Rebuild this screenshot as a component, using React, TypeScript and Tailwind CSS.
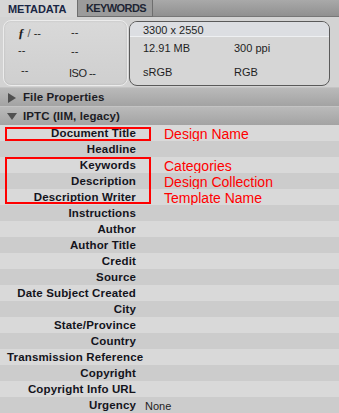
import React from "react";

const rows: { label: string; note?: string; value?: string }[] = [
  { label: "Document Title", note: "Design Name" },
  { label: "Headline" },
  { label: "Keywords", note: "Categories" },
  { label: "Description", note: "Design Collection" },
  { label: "Description Writer", note: "Template Name" },
  { label: "Instructions" },
  { label: "Author" },
  { label: "Author Title" },
  { label: "Credit" },
  { label: "Source" },
  { label: "Date Subject Created" },
  { label: "City" },
  { label: "State/Province" },
  { label: "Country" },
  { label: "Transmission Reference" },
  { label: "Copyright" },
  { label: "Copyright Info URL" },
  { label: "Urgency", value: "None" },
];

function SectionHeader({ title, open, tall }: { title: string; open?: boolean; tall?: boolean }) {
  return (
    <div
      className={`${tall ? "h-[20px]" : "h-[19px]"} flex items-center pt-[1px] bg-gradient-to-b from-[#bababa] to-[#a3a3a3] border-t border-[#c4c4c4]`}
    >
      <div className="w-[23px] flex justify-center">
        {open ? (
          <svg width="10" height="8" viewBox="0 0 10 8">
            <polygon points="0,0 10,0 5,7" fill="#505050" />
          </svg>
        ) : (
          <svg width="8" height="10" viewBox="0 0 8 10">
            <polygon points="0,0 8,5 0,10" fill="#505050" />
          </svg>
        )}
      </div>
      <span className="text-[11.5px] font-bold text-[#1c1c24] tracking-[0.1px] leading-none">{title}</span>
    </div>
  );
}

export default function App() {
  return (
    <div
      className="w-[339px] h-[413px] overflow-hidden bg-[#d3d3d3] flex flex-col"
      style={{ fontFamily: '"Liberation Sans", Arial, sans-serif' }}
    >
      {/* Tabs */}
      <div className="h-[17px] flex bg-gradient-to-b from-[#a9a9a9] to-[#8f8f8f] shrink-0">
        <div className="w-[77px] bg-[#d6d6d6] flex items-center pl-[8px] pt-[1px] text-[11px] font-bold text-[#1a2644] tracking-[-0.1px] leading-none">
          METADATA
        </div>
        <div className="w-[76px] bg-[#9b9b9b] border-x border-[#6e6e6e] border-b flex items-center pl-[8px] pt-[1px] text-[11px] font-bold text-[#1e2533] tracking-[-0.6px] leading-none">
          KEYWORDS
        </div>
        <div className="flex-1 border-b border-[#777]" />
      </div>

      {/* Info panel */}
      <div className="h-[70px] shrink-0 flex pl-[3px] pt-[3px] gap-[1px] text-[11px] text-[#1e1e1e] leading-none">
        <div className="w-[125px] h-[66px] rounded-[8px] border border-[#ececec] bg-gradient-to-b from-[#d9d9d9] to-[#cfcfcf] shadow-[inset_0_0_2px_rgba(0,0,0,0.15)] grid grid-cols-[52px_1fr] grid-rows-3 items-center pl-[13px] pt-[2px] pb-[4px]">
          <span className="pl-[1px]">
            <span className="italic font-bold text-[13px]" style={{ fontFamily: '"Liberation Serif", serif' }}>ƒ</span>
            <span className="text-[#555]"> / </span>--
          </span>
          <span className="pl-[2px]">--</span>
          <span className="pl-[1px] -mt-[2px]">--</span>
          <span className="pl-[2px]">--</span>
          <span className="pl-[4px] -mt-[2px]">--</span>
          <span className="mt-[4px] tracking-[-0.5px]">ISO --</span>
        </div>
        <div className="w-[201px] h-[65px] mt-[1px] rounded-[8px] border border-[#5a5a5a] bg-[#d6d6d6] overflow-hidden flex flex-col">
          <div className="h-[15px] bg-[#dcdee2] border-b border-[#eef0f2] flex items-center pl-[13px] pt-[2px]">3300 x 2550</div>
          <div className="flex-1 grid grid-cols-[91px_1fr] grid-rows-2 items-center pl-[13px] pb-[1px]">
            <span>12.91 MB</span>
            <span>300 ppi</span>
            <span>sRGB</span>
            <span>RGB</span>
          </div>
        </div>
      </div>

      <SectionHeader title="File Properties" tall />
      <SectionHeader title="IPTC (IIM, legacy)" open />

      {/* Rows */}
      <div className="relative flex flex-col">
        {rows.map((r, i) => (
          <div
            key={r.label}
            className={`h-[16px] shrink-0 flex items-center pt-[2px] ${i % 2 === 0 ? "bg-[#d9d9d9]" : "bg-[#cccccc]"}`}
          >
            <div className="ml-[7px] w-[129px] text-right whitespace-nowrap text-[11.5px] font-bold text-[#14141c] tracking-[0.15px] leading-none">
              {r.label}
            </div>
            {r.value && <div className="ml-[9px] text-[11px] text-[#1e1e1e] leading-none">{r.value}</div>}
            {r.note && <div className="ml-[28px] text-[14px] text-[#ff0000] leading-none">{r.note}</div>}
          </div>
        ))}
        <div className="absolute left-[5px] top-[2px] w-[146px] h-[14px] border-2 border-[#ff0000]" />
        <div className="absolute left-[5px] top-[32px] w-[146px] h-[47px] border-2 border-[#ff0000]" />
      </div>
    </div>
  );
}
